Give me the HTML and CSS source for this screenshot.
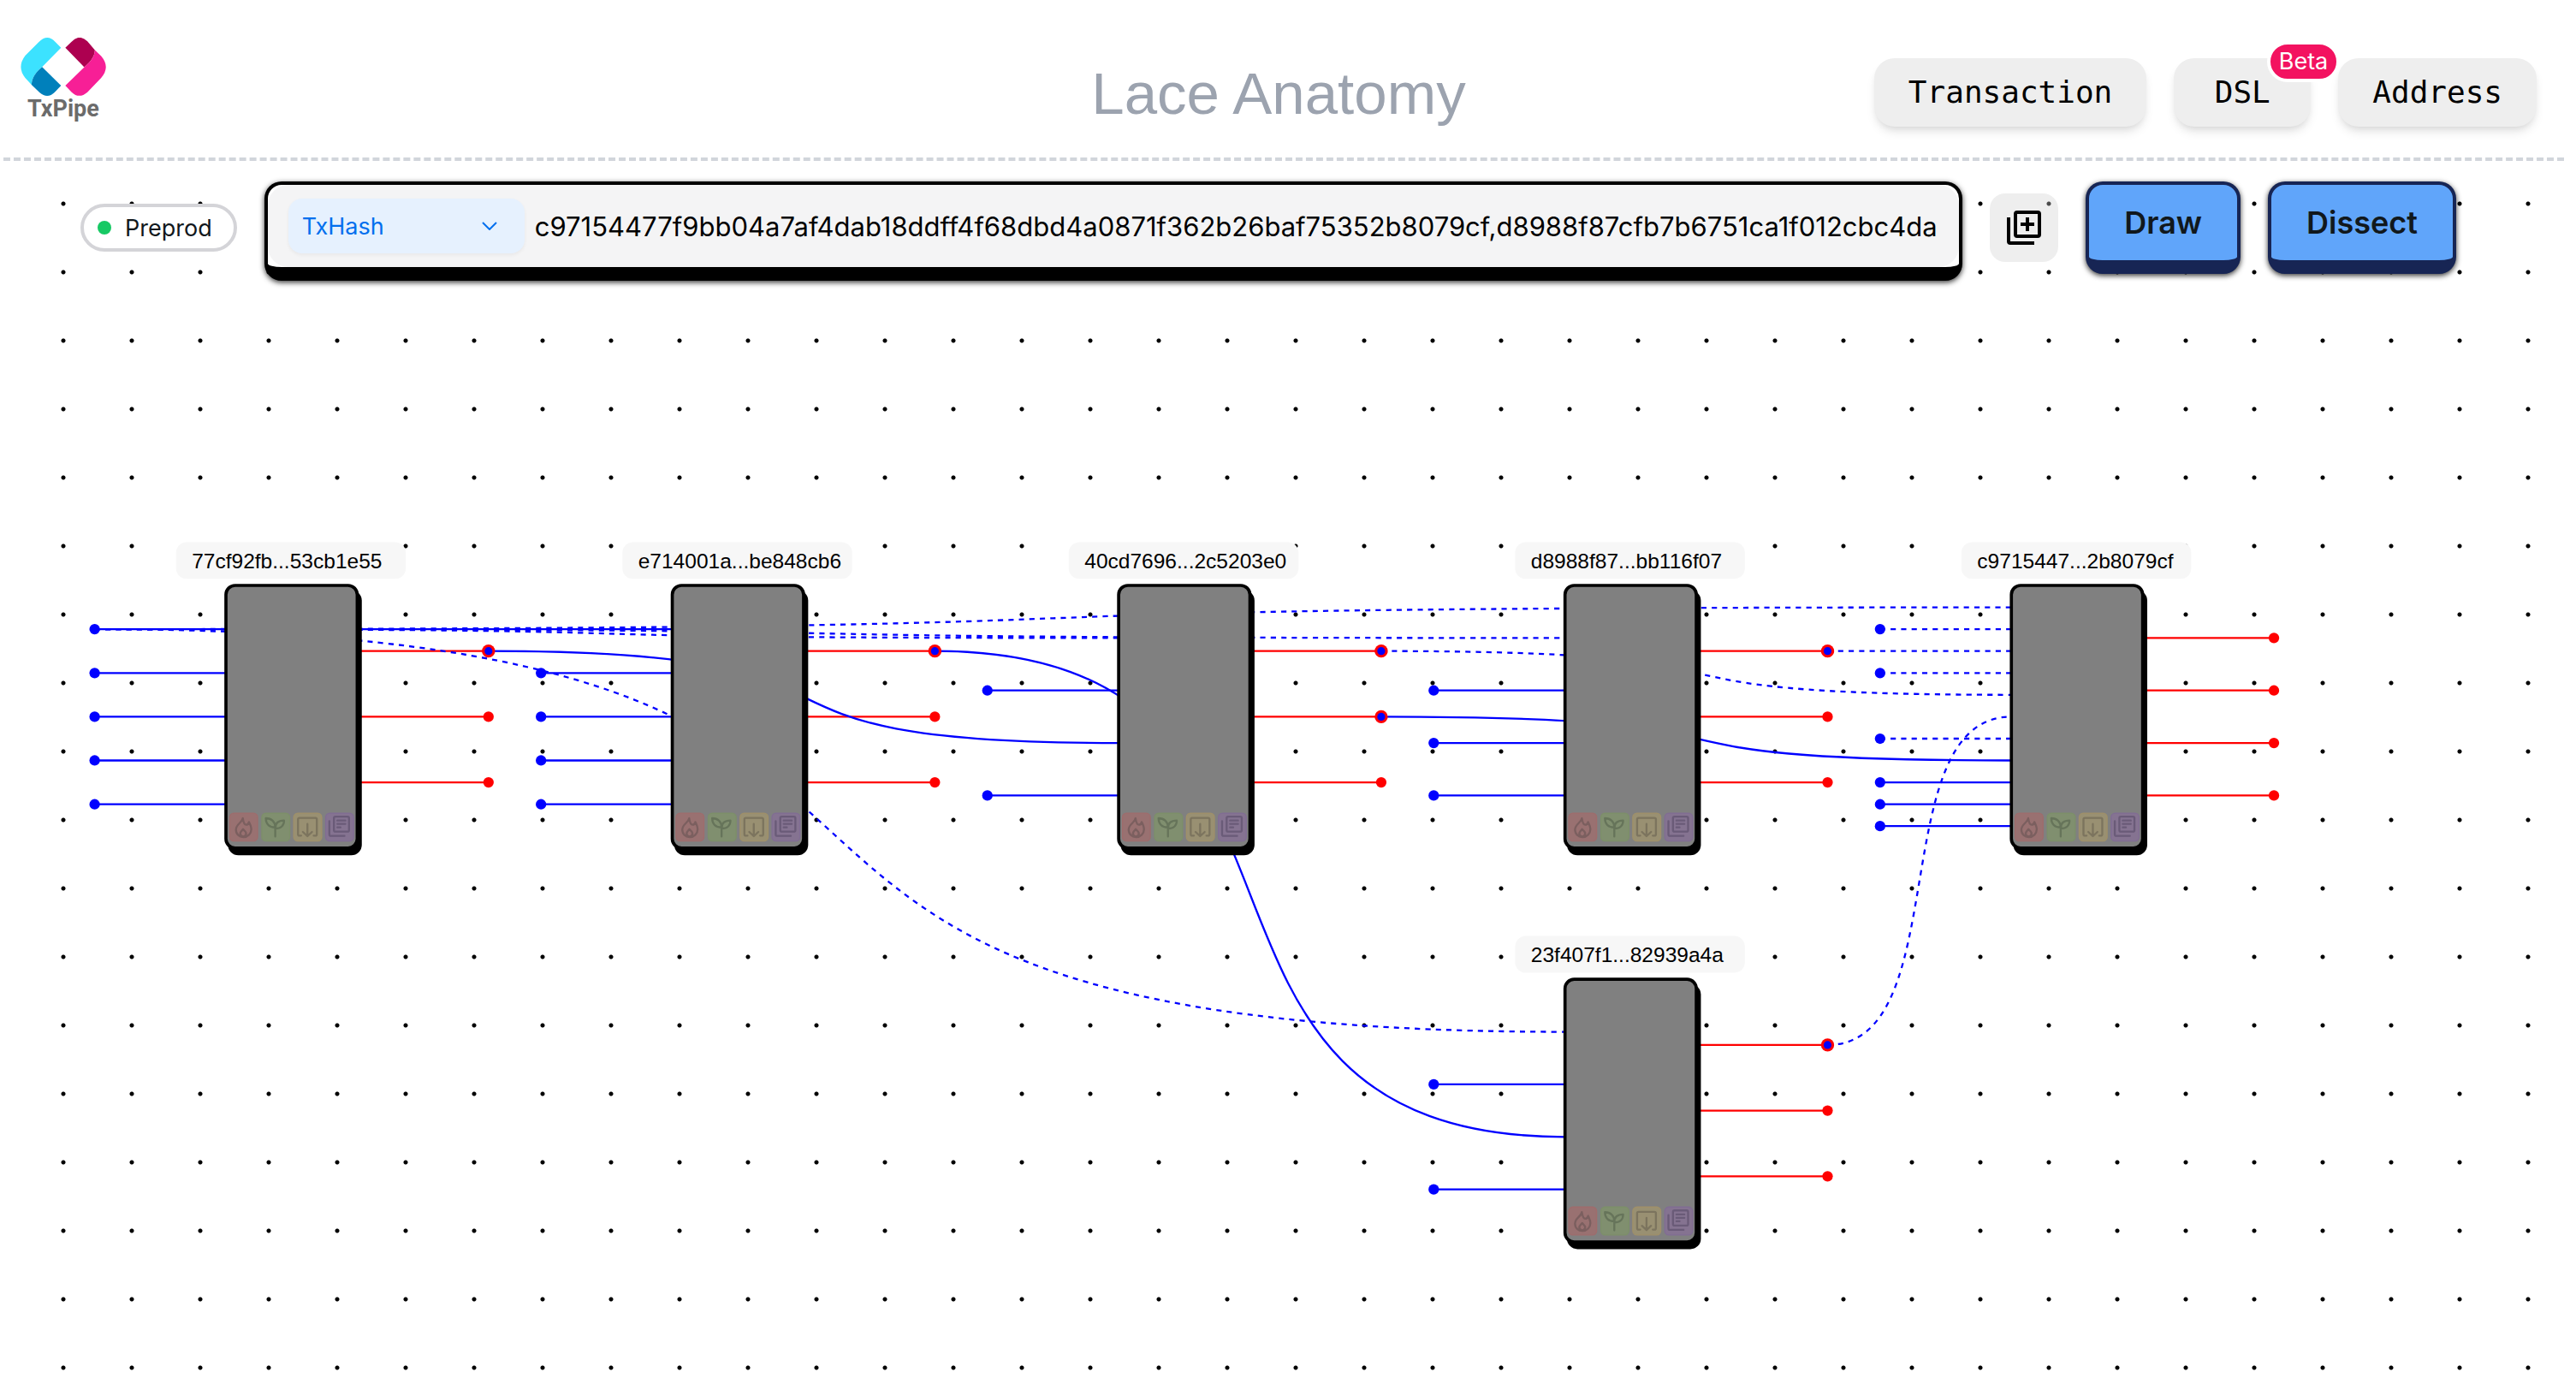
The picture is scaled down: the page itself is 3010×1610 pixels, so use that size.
FILE: index.html
```html
<!DOCTYPE html>
<html lang="en">
<head>
<meta charset="utf-8">
<title>Lace Anatomy</title>
<link rel="stylesheet" href="styles.css">
</head>
<body>
<header class="header">
  <a class="logo" href="#">
    <svg class="logo-mark" viewBox="44 45 298 203" aria-hidden="true">
      <path fill="#3ce2ff" d="M185 80L119 147C98 164 84 182 82 209L60 185Q30 148 60 108L107 61Q137 30 165 60Z"/>
      <path fill="#0080bb" d="M119 147L185 212L163 235Q138 260 110 236L82 209C84 182 98 164 119 147Z"/>
      <path fill="#ad0050" d="M200 80L221 60Q248 30 277 58L303 88C302 112 287 130 266 148Z"/>
      <path fill="#f71f96" d="M303 88L325 109Q358 148 325 185L277 235Q248 260 222 235L200 212L266 148C287 130 302 112 303 88Z"/>
    </svg>
    <span class="logo-text">TxPipe</span>
  </a>
  <h1 class="title">Lace Anatomy</h1>
  <nav class="nav">
    <button class="nav-button" type="button">Transaction</button>
    <button class="nav-button" type="button">DSL<span class="badge">Beta</span></button>
    <button class="nav-button" type="button">Address</button>
  </nav>
</header>
<main class="board">
  <form class="toolbar">
    <button class="network" type="button"><span class="status"></span>Preprod</button>
    <div class="search">
      <div class="search-field">
        <div class="kind">
          <select class="kind-select" aria-label="Search by"><option>TxHash</option><option>CBOR</option></select>
          <svg class="kind-arrow" viewBox="0 0 18 10" aria-hidden="true"><path d="M1 1l8 8 8-8"/></svg>
        </div>
        <input class="query" type="text" aria-label="Transaction hashes" value="c97154477f9bb04a7af4dab18ddff4f68dbd4a0871f362b26baf75352b8079cf,d8988f87cfb7b6751ca1f012cbc4da">
      </div>
    </div>
    <button class="add" type="button" aria-label="Add several">
      <svg class="add-icon" viewBox="0 0 24 24" aria-hidden="true"><path d="M4 6H2v14a2 2 0 0 0 2 2h14v-2H4V6zm16-4H8a2 2 0 0 0-2 2v12a2 2 0 0 0 2 2h12a2 2 0 0 0 2-2V4a2 2 0 0 0-2-2zm0 14H8V4h12v12zm-7-2h2v-3h3V9h-3V6h-2v3h-3v2h3z"/></svg>
    </button>
    <button class="action" type="button">Draw</button>
    <button class="action" type="button">Dissect</button>
  </form>

  <svg class="graph" role="img" aria-label="Transaction graph">
    <defs>
      <g id="box">
        <rect class="box-shadow" x="1.5" y="3.5" width="102" height="202" rx="8"/>
        <rect class="box-body" width="100" height="200" rx="7"/>
        <g transform="translate(2.4 173) scale(.217)">
          <g class="mark burn">
            <rect x="2" y="2" width="98" height="98" rx="14"/>
            <path d="M48 20C46 36 24 40 24 60C24 76 36 86 50 86C66 86 78 74 78 58C78 48 74 42 70 33C68 40 64 43 60 43C54 43 50 32 48 20ZM49 58L41 68a10 10 0 1 0 17 0Z"/>
          </g>
          <g class="mark mint" transform="translate(113 0)">
            <rect x="2" y="2" width="98" height="98" rx="14"/>
            <path d="M16 20C16 40 28 52 49 52C49 32 36 20 16 20ZM80 28C60 28 49 38 49 56C68 56 80 46 80 28ZM49 50V84"/>
          </g>
          <g class="mark store" transform="translate(225 0)">
            <rect x="2" y="2" width="98" height="98" rx="14"/>
            <path d="M28 81H22Q17 81 17 76V24Q17 19 22 19H78Q83 19 83 24V76Q83 81 78 81H72M50 40V82M34 68L50 83L66 68"/>
          </g>
          <g class="mark notes" transform="translate(337 0)">
            <rect x="2" y="2" width="98" height="98" rx="14"/>
            <path d="M36 14H79Q84 14 84 19V62Q84 67 79 67H36Q31 67 31 62V19Q31 14 36 14ZM15 30V77Q15 82 20 82H68M43 28H71M43 40H71M43 52H54"/>
          </g>
        </g>
      </g>
      <g id="outputs">
        <path class="output" d="M100 50H200M100 100H200M100 150H200"/>
        <circle class="output-dot" cx="200" cy="50" r="4"/>
        <circle class="output-dot" cx="200" cy="100" r="4"/>
        <circle class="output-dot" cx="200" cy="150" r="4"/>
      </g>
      <g id="spent">
        <circle class="output-dot" r="5"/>
        <circle class="input-dot" r="3"/>
      </g>
      <rect id="tag" class="tag" x="-38" y="-33" width="175" height="28" rx="8"/>
    </defs>

    <g transform="translate(264 344) scale(1.534)">
      <use href="#outputs"/>
      <use href="#outputs" x="340"/>
      <use href="#outputs" x="680"/>
      <use href="#outputs" x="1020"/>
      <use href="#outputs" x="1020" y="300"/>
      <path class="output" d="M1460 40H1560M1460 80H1560M1460 120H1560M1460 160H1560"/>
      <g class="output-dot">
        <circle cx="1560" cy="40" r="4"/><circle cx="1560" cy="80" r="4"/><circle cx="1560" cy="120" r="4"/><circle cx="1560" cy="160" r="4"/>
      </g>

      <path class="input" d="M-100 33.3H340M-100 66.7H0M-100 100H0M-100 133.3H0M-100 166.7H0"/>
      <path class="input" d="M240 66.7H340M240 100H340M240 133.3H340M240 166.7H340"/>
      <path class="input" d="M580 80H680M580 160H680"/>
      <path class="input" d="M920 80H1020M920 120H1020M920 160H1020"/>
      <path class="input" d="M920 380H1020M920 460H1020"/>
      <path class="input" d="M1260 150H1360M1260 166.7H1360M1260 183.3H1360"/>
      <path class="input" d="M200 50C536 50 344 120 680 120"/>
      <path class="input" d="M540 50C876 50 684 420 1020 420"/>
      <path class="input" d="M880 100C1216 100 1024 133.3 1360 133.3"/>

      <path class="input reference" d="M-100 33.3C922 33.3 338 16.7 1360 16.7"/>
      <path class="input reference" d="M-100 33.3C446 33.3 134 40 680 40"/>
      <path class="input reference" d="M-100 33.3C684 33.3 236 40 1020 40"/>
      <path class="input reference" d="M-100 33.3C684 33.3 236 340 1020 340"/>
      <path class="input reference" d="M880 50C1216 50 1024 83.3 1360 83.3"/>
      <path class="input reference" d="M1220 350C1318 350 1262 100 1360 100"/>
      <path class="input reference" d="M1220 50H1360"/>
      <path class="input reference" d="M1260 33.3H1360"/>
      <path class="input reference" d="M1260 66.7H1360"/>
      <path class="input reference" d="M1260 116.7H1360"/>

      <use href="#spent" x="200" y="50"/>
      <use href="#spent" x="540" y="50"/>
      <use href="#spent" x="880" y="50"/>
      <use href="#spent" x="880" y="100"/>
      <use href="#spent" x="1220" y="50"/>
      <use href="#spent" x="1220" y="350"/>

      <g class="input-dot">
        <circle cx="-100" cy="33.3" r="4"/><circle cx="-100" cy="66.7" r="4"/><circle cx="-100" cy="100" r="4"/><circle cx="-100" cy="133.3" r="4"/><circle cx="-100" cy="166.7" r="4"/>
        <circle cx="240" cy="66.7" r="4"/><circle cx="240" cy="100" r="4"/><circle cx="240" cy="133.3" r="4"/><circle cx="240" cy="166.7" r="4"/>
        <circle cx="580" cy="80" r="4"/><circle cx="580" cy="160" r="4"/>
        <circle cx="920" cy="80" r="4"/><circle cx="920" cy="120" r="4"/><circle cx="920" cy="160" r="4"/>
        <circle cx="920" cy="380" r="4"/><circle cx="920" cy="460" r="4"/>
        <circle cx="1260" cy="33.3" r="4"/><circle cx="1260" cy="66.7" r="4"/><circle cx="1260" cy="116.7" r="4"/><circle cx="1260" cy="150" r="4"/><circle cx="1260" cy="166.7" r="4"/><circle cx="1260" cy="183.3" r="4"/>
      </g>

      <use href="#box"/><use href="#tag"/>
      <use href="#box" x="340"/><use href="#tag" x="340"/>
      <use href="#box" x="680"/><use href="#tag" x="680"/>
      <use href="#box" x="1020"/><use href="#tag" x="1020"/>
      <use href="#box" x="1360"/><use href="#tag" x="1360"/>
      <use href="#box" x="1020" y="300"/><use href="#tag" x="1020" y="300"/>
      <g class="hash">
        <text x="-26" y="-13">77cf92fb...53cb1e55</text>
        <text x="314" y="-13">e714001a...be848cb6</text>
        <text x="654" y="-13">40cd7696...2c5203e0</text>
        <text x="994" y="-13">d8988f87...bb116f07</text>
        <text x="1334" y="-13">c9715447...2b8079cf</text>
        <text x="994" y="287">23f407f1...82939a4a</text>
      </g>
    </g>
  </svg>
</main>
</body>
</html>
```
FILE: styles.css
```css
* {
  box-sizing: border-box;
}

body {
  margin: 0;
  min-height: 100vh;
  display: flex;
  flex-direction: column;
  background: #fff;
  color: #11181c;
  font-family: Inter, "Liberation Sans", sans-serif;
}

button,
select,
input {
  margin: 0;
  border: 0;
  padding: 0;
  color: inherit;
  font: inherit;
}

.header {
  display: grid;
  grid-template-columns: 1fr auto 1fr;
  align-items: center;
  min-height: 188px;
  margin: 0 14px 0 4px;
  padding: 32px 32px 0 20px;
  border-bottom: 4px dashed #d1d5db;
}

.logo {
  display: flex;
  flex-direction: column;
  align-items: center;
  align-self: start;
  justify-self: start;
  padding-top: 12px;
  text-decoration: none;
}

.logo-mark {
  display: block;
  width: 100px;
  height: 68px;
}

.logo-text {
  color: #6b6b6b;
  font: 700 27px/30px Roboto, sans-serif;
}

.title {
  margin: 0;
  padding-top: 4px;
  color: #9ca3af;
  font: 400 69px/80px "Liberation Sans", sans-serif;
}

.nav {
  display: flex;
  justify-content: flex-end;
  gap: 32px;
}

.nav-button {
  position: relative;
  min-width: 160px;
  height: 80px;
  padding: 0 40px;
  border-radius: 24px;
  background: #eee;
  box-shadow: 0 8px 12px -2px rgba(0, 0, 0, .1), 0 4px 8px -4px rgba(0, 0, 0, .1);
  color: #000;
  font: 36px/48px "DejaVu Sans Mono", monospace;
}

.badge {
  position: absolute;
  top: -20px;
  right: -34px;
  padding: 0 10px;
  border: 4px solid #fff;
  border-radius: 24px;
  background: #f31260;
  color: #fff;
  font: 27px/40px Inter, sans-serif;
}

.board {
  flex: 1;
  display: flex;
  flex-direction: column;
  background: radial-gradient(circle, #000 2px, transparent 3px) 34px 10px / 80px 80px;
}

.toolbar {
  display: flex;
  align-items: center;
  gap: 32px;
  height: 152px;
  padding: 24px 140px 20px 94px;
}

.network {
  display: flex;
  align-items: center;
  gap: 16px;
  height: 56px;
  padding: 0 25px 0 16px;
  border: 4px solid #d4d4d8;
  border-radius: 28px;
  background: #fff;
  font-size: 27px;
}

.status {
  width: 16px;
  height: 16px;
  border-radius: 50%;
  background: #17c964;
}

.search {
  flex: 1;
  align-self: flex-start;
  min-width: 0;
  border: 4px solid #000;
  border-bottom-width: 16px;
  border-radius: 20px;
  background: #fff;
  box-shadow: 0 2px 6px rgba(0, 0, 0, .8);
}

.search-field {
  display: flex;
  align-items: center;
  gap: 12px;
  height: 96px;
  padding: 0 24px;
  border-radius: 24px;
  background: #f4f4f5;
}

.kind {
  display: flex;
  position: relative;
  width: 276px;
}

.kind-select {
  width: 100%;
  height: 64px;
  padding: 0 16px;
  border-radius: 16px;
  appearance: none;
  background: #e6f1fe;
  box-shadow: 0 2px 4px rgba(0, 0, 0, .05);
  color: #006fee;
  font-size: 27px;
}

.kind-arrow {
  position: absolute;
  top: 27px;
  right: 32px;
  width: 18px;
  height: 10px;
  fill: none;
  stroke: #006fee;
  stroke-width: 2;
}

.query {
  flex: 1;
  min-width: 0;
  height: 64px;
  background: transparent;
  color: #000;
  font-size: 31px;
}

.add {
  display: grid;
  place-items: center;
  width: 80px;
  height: 80px;
  border-radius: 18px;
  background: rgba(207, 207, 207, .36);
}

.add-icon {
  width: 48px;
  height: 48px;
}

.action {
  height: 108px;
  padding: 0 41px;
  border: 4px solid #172554;
  border-bottom-width: 16px;
  border-radius: 20px;
  background: #60a5fa;
  box-shadow: 0 2px 6px rgba(0, 0, 0, .8);
  font-size: 36px;
  font-weight: 600;
}

.graph {
  flex: 1;
  display: block;
  width: 100%;
  min-height: 1200px;
}

.box-shadow {
  fill: #000;
}

.box-body {
  fill: #808080;
  stroke: #000;
  stroke-width: 2.4;
}

.input,
.output {
  fill: none;
  stroke: #00f;
  stroke-width: 1.5;
}

.output {
  stroke: #f00;
}

.reference {
  stroke-dasharray: 4 4;
}

.input-dot {
  fill: #00f;
}

.output-dot {
  fill: #f00;
}

.tag {
  fill: #f7f7f7;
}

.hash {
  fill: #000;
  font: 16px "Liberation Sans", sans-serif;
}

.mark rect {
  stroke-width: 4;
}

.mark path {
  fill: none;
  stroke-width: 7;
  stroke-linecap: round;
  stroke-linejoin: round;
}

.burn {
  fill: #997171;
  stroke: #9f6c6c;
}

.burn path {
  stroke: #7b5f5f;
}

.mint {
  fill: #808f6f;
  stroke: #7c9068;
}

.mint path {
  stroke: #66745a;
}

.store {
  fill: #999072;
  stroke: #a09068;
}

.store path {
  stroke: #7c745e;
}

.notes {
  fill: #857391;
  stroke: #806c94;
}

.notes path {
  stroke: #6a5b78;
}
```
